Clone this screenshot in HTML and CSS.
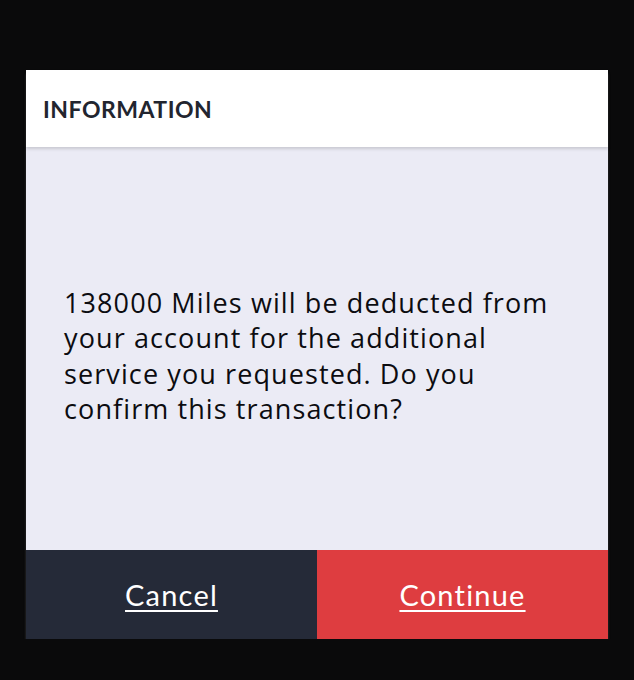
FILE: index.html
```html
<!DOCTYPE html>
<html>
<head>
    <title>Information</title>
    <link rel="stylesheet" href="styles.css">
</head>
<body>
    <div class="dialog">
        <div class="dialog-header">
            <h2>INFORMATION</h2>
        </div>
        <div class="dialog-body">
            <p>138000 Miles will be deducted from your account for the additional service you requested. Do you confirm this transaction?</p>
        </div>
        <div class="dialog-actions">
            <a class="btn btn-cancel" href="#">Cancel</a>
            <a class="btn btn-continue" href="#">Continue</a>
        </div>
    </div>
</body>
</html>
```

FILE: styles.css
```css
body {
    background-color: #0a0a0b;
    font-family: Lato, "Noto Sans", sans-serif;
    margin: 0;
    padding: 70px 0 0 0;
}

.dialog {
    width: 582px;
    margin: 0 auto;
    display: flex;
    flex-direction: column;
    box-shadow: 0 4px 2px rgba(60, 60, 64, 0.9);
}

.dialog-header {
    height: 77px;
    background-color: #fff;
    display: flex;
    align-items: center;
    padding: 0 17px;
    box-shadow: 0 2px 3px rgba(0, 0, 0, 0.15);
    position: relative;
    z-index: 1;
}

.dialog-header h2 {
    margin: 0;
    font-size: 23px;
    font-weight: 700;
    letter-spacing: 0.5px;
    color: #22252f;
}

.dialog-body {
    height: 403px;
    background-color: #ebebf5;
    display: flex;
    align-items: center;
    padding: 14px 38px 0 38px;
    box-sizing: border-box;
}

.dialog-body p {
    margin: 0;
    font-family: "Open Sans", sans-serif;
    font-size: 27px;
    font-weight: 500;
    line-height: 35.5px;
    letter-spacing: 1.1px;
    color: #0c0c10;
}

.dialog-actions {
    display: flex;
    height: 89px;
}

.btn {
    flex: 1;
    display: flex;
    align-items: center;
    justify-content: center;
    color: #fff;
    font-size: 29px;
    letter-spacing: 1.2px;
    text-decoration: underline;
    text-decoration-thickness: 2px;
    text-underline-offset: 4px;
}

.btn-cancel {
    background-color: #252a38;
}

.btn-continue {
    background-color: #de3d40;
}
```
